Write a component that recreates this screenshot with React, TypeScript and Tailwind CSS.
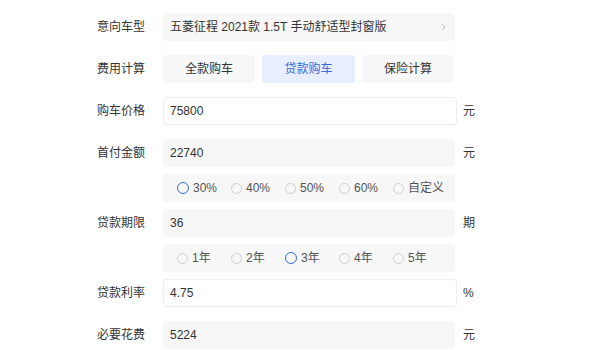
import React from "react";

const font = { fontFamily: '"Liberation Sans", "Noto Sans CJK SC", sans-serif' };

function Radio({ label, selected }: { label: string; selected?: boolean }) {
  return (
    <div className="flex w-[54px] items-center gap-[4px]">
      {selected ? (
        <span className="box-border h-[12px] w-[12px] rounded-full border-[1.5px] border-[#3a6bd6]" />
      ) : (
        <span className="box-border h-[11px] w-[11px] rounded-full border border-[#cfcfcf]" />
      )}
      <span className="text-[12px] text-[#555]">{label}</span>
    </div>
  );
}

function Row({
  label,
  value,
  unit,
  white,
}: {
  label: string;
  value: string;
  unit: string;
  white?: boolean;
}) {
  return (
    <div className="flex h-[28px] items-center">
      <div className="w-[66px] text-[12px] text-[#333]">{label}</div>
      <div className="w-[300px]">
        {white ? (
          <div className="box-border flex h-[28px] w-[294px] items-center rounded-[3px] border border-[#eeeeee] bg-white pl-[6px] text-[12px] text-[#333]">
            {value}
          </div>
        ) : (
          <div className="flex h-[28px] w-[292px] items-center rounded-[3px] bg-[#f7f7f7] pl-[7px] text-[12px] text-[#333]">
            {value}
          </div>
        )}
      </div>
      <div className="text-[12px] text-[#333]">{unit}</div>
    </div>
  );
}

function Options({ items, selected }: { items: string[]; selected: number }) {
  return (
    <div className="mt-[7px] flex">
      <div className="w-[66px]" />
      <div className="flex h-[28px] w-[292px] items-center rounded-[3px] bg-[#f7f7f7] pl-[14px]">
        {items.map((it, i) => (
          <Radio key={it} label={it} selected={i === selected} />
        ))}
      </div>
    </div>
  );
}

export default function App() {
  return (
    <div className="h-[350px] w-[600px] overflow-hidden bg-white pl-[97px] pt-[13px]" style={font}>
      <div className="flex h-[28px] items-center">
        <div className="w-[66px] text-[12px] text-[#333]">意向车型</div>
        <div className="flex h-[28px] w-[292px] items-center justify-between rounded-[3px] bg-[#f7f7f7] pl-[7px] pr-[9px] text-[12px] text-[#333]">
          <span>五菱征程 2021款 1.5T 手动舒适型封窗版</span>
          <svg width="5" height="8" viewBox="0 0 5 8">
            <path d="M1 1 L4 4 L1 7" fill="none" stroke="#bbbbbb" strokeWidth="1" />
          </svg>
        </div>
      </div>

      <div className="mt-[14px] flex h-[28px] items-center">
        <div className="w-[66px] text-[12px] text-[#333]">费用计算</div>
        <div className="flex w-[292px] gap-[7px]">
          <div className="flex h-[28px] w-[92px] items-center justify-center rounded-[3px] bg-[#f7f7f7] text-[12px] text-[#333]">
            全款购车
          </div>
          <div className="flex h-[28px] w-[93px] items-center justify-center rounded-[3px] bg-[#e6eeff] text-[12px] text-[#3a6bd6]">
            贷款购车
          </div>
          <div className="flex h-[28px] w-[92px] items-center justify-center rounded-[3px] bg-[#f7f7f7] text-[12px] text-[#333]">
            保险计算
          </div>
        </div>
      </div>

      <div className="mt-[14px]">
        <Row label="购车价格" value="75800" unit="元" white />
      </div>
      <div className="mt-[14px]">
        <Row label="首付金额" value="22740" unit="元" />
      </div>
      <Options items={["30%", "40%", "50%", "60%", "自定义"]} selected={0} />
      <div className="mt-[7px]">
        <Row label="贷款期限" value="36" unit="期" />
      </div>
      <Options items={["1年", "2年", "3年", "4年", "5年"]} selected={2} />
      <div className="mt-[7px]">
        <Row label="贷款利率" value="4.75" unit="%" white />
      </div>
      <div className="mt-[14px]">
        <Row label="必要花费" value="5224" unit="元" />
      </div>
    </div>
  );
}
